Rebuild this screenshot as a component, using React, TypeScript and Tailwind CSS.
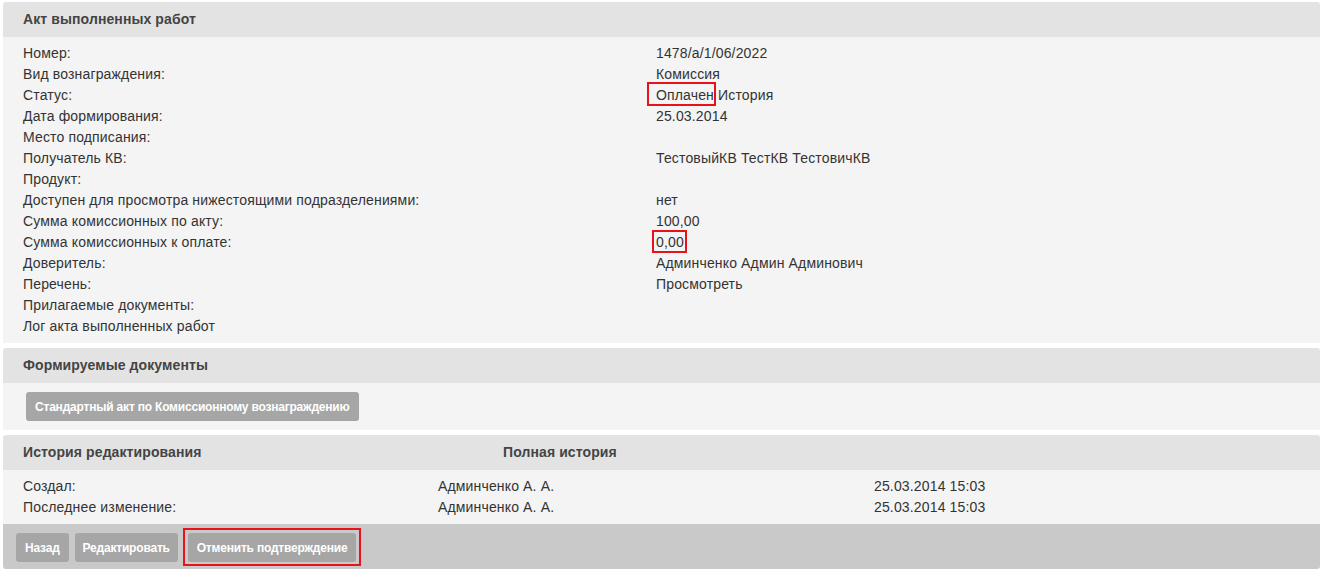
import React from "react";

const rows: [string, React.ReactNode][] = [
  ["Номер:", "1478/a/1/06/2022"],
  ["Вид вознаграждения:", "Комиссия"],
  [
    "Статус:",
    <>
      <span className="relative">
        Оплачен
        <span className="absolute left-[-9px] right-[-2px] top-[-5px] bottom-[-3px] border-2 border-[#e8121b]" />
      </span>{" "}
      История
    </>,
  ],
  ["Дата формирования:", "25.03.2014"],
  ["Место подписания:", ""],
  ["Получатель КВ:", "ТестовыйКВ ТестКВ ТестовичКВ"],
  ["Продукт:", ""],
  ["Доступен для просмотра нижестоящими подразделениями:", "нет"],
  ["Сумма комиссионных по акту:", "100,00"],
  [
    "Сумма комиссионных к оплате:",
    <span className="relative">
      0,00
      <span className="absolute left-[-4px] right-[-3px] top-[-4px] bottom-[-3px] border-2 border-[#e8121b]" />
    </span>,
  ],
  ["Доверитель:", "Админченко Админ Админович"],
  ["Перечень:", "Просмотреть"],
  ["Прилагаемые документы:", ""],
  ["Лог акта выполненных работ", ""],
];

const history = [
  ["Создал:", "Админченко А. А.", "25.03.2014 15:03"],
  ["Последнее изменение:", "Админченко А. А.", "25.03.2014 15:03"],
];

const Header = ({ children }: { children: React.ReactNode }) => (
  <div className="h-[35px] bg-[#e3e3e3] flex items-center pl-[20px] text-[14px] font-bold text-[#444] tracking-[0.1px]">
    {children}
  </div>
);

const Btn = ({ children, className = "px-[9px]" }: { children: React.ReactNode; className?: string }) => (
  <button className={`h-[29px] rounded-[3px] bg-[#a6a6a6] text-white text-[12px] font-bold leading-none tracking-[-0.2px] ${className}`}>
    {children}
  </button>
);

const App = () => {
  return (
    <div
      className="bg-white min-h-screen pt-[2px] pl-[3px] pr-[1px] text-[14px] text-[#333] tracking-[0.15px]"
      style={{ fontFamily: '"Liberation Sans", Arial, sans-serif' }}
    >
      {/* Акт */}
      <div className="rounded-t-[3px] overflow-hidden">
        <Header>Акт выполненных работ</Header>
        <div className="bg-[#f4f4f4] pt-[6px] pb-[6px] px-[20px]">
          {rows.map(([label, value], i) => (
            <div key={i} className="grid grid-cols-[633px_1fr] h-[21px] items-center">
              <div>{label}</div>
              <div>{value}</div>
            </div>
          ))}
        </div>
      </div>

      {/* Формируемые документы */}
      <div className="mt-[5px] rounded-t-[3px] overflow-hidden">
        <Header>Формируемые документы</Header>
        <div className="bg-[#f4f4f4] h-[47px] pt-[9px] pl-[23px]">
          <Btn>Стандартный акт по Комиссионному вознаграждению</Btn>
        </div>
      </div>

      {/* История */}
      <div className="mt-[5px] rounded-[3px] overflow-hidden">
        <div className="h-[35px] bg-[#e3e3e3] grid grid-cols-[480px_1fr] items-center pl-[20px] text-[14px] font-bold text-[#444] tracking-[0.1px]">
          <div>История редактирования</div>
          <div>Полная история</div>
        </div>
        <div className="bg-[#f4f4f4] pt-[6px] pb-[6px] px-[20px]">
          {history.map((r, i) => (
            <div key={i} className="grid grid-cols-[415px_436px_1fr] h-[21px] items-center">
              <div>{r[0]}</div>
              <div>{r[1]}</div>
              <div>{r[2]}</div>
            </div>
          ))}
        </div>
        <div className="bg-[#c9c9c9] h-[45px] pt-[9px] pl-[13px] flex items-start gap-[6px]">
          <Btn>Назад</Btn>
          <Btn className="px-[8px]">Редактировать</Btn>
          <div className="relative ml-[4px]">
            <Btn>Отменить подтверждение</Btn>
            <span className="absolute left-[-5px] right-[-5px] top-[-5px] bottom-[-4px] border-2 border-[#e8121b]" />
          </div>
        </div>
      </div>
    </div>
  );
};

export default App;
